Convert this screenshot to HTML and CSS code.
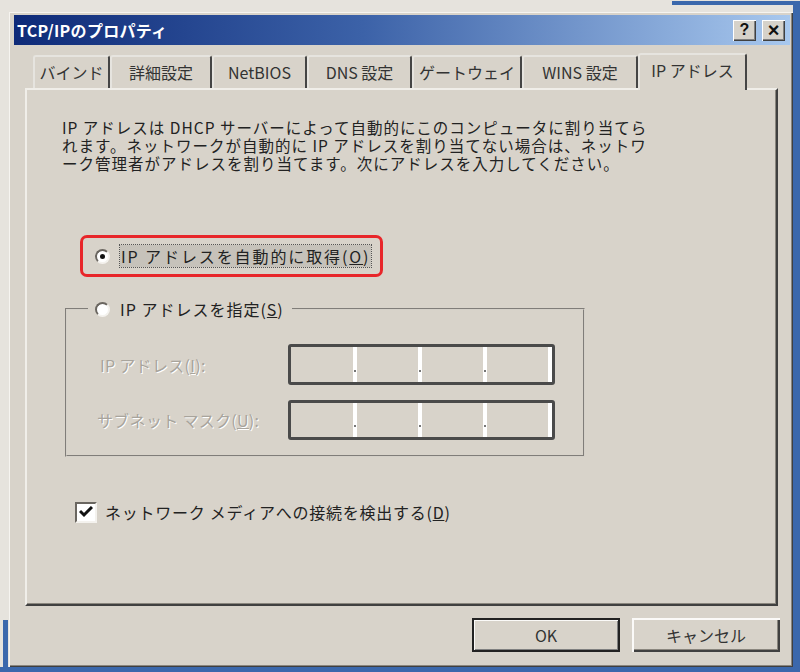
FILE: index.html
```html
<!DOCTYPE html>
<html lang="ja">
<head>
    <meta charset="UTF-8">
    <title>TCP/IPのプロパティ</title>
    <link rel="stylesheet" href="styles.css">
</head>
<body>
    <!-- windows behind the dialog -->
    <div class="back back-top"></div>
    <div class="back back-right"></div>
    <div class="back back-left"></div>
    <div class="back back-bottom"></div>

    <div class="dialog">
        <div class="titlebar">
            <span class="title">TCP/IPのプロパティ</span>
            <div class="title-btns">
                <span class="tbtn">?</span>
                <span class="tbtn tbtn-close">×</span>
            </div>
        </div>

        <div class="dialog-body">
            <div class="tabs">
                <div class="tab w1">バインド</div>
                <div class="tab w2">詳細設定</div>
                <div class="tab w3">NetBIOS</div>
                <div class="tab w4">DNS 設定</div>
                <div class="tab w5">ゲートウェイ</div>
                <div class="tab w6">WINS 設定</div>
                <div class="tab tab-active w7">IP アドレス</div>
            </div>

            <div class="panel">
                <p class="intro">IP アドレスは DHCP サーバーによって自動的にこのコンピュータに割り当てら<br>れます。ネットワークが自動的に IP アドレスを割り当てない場合は、ネットワ<br>ーク管理者がアドレスを割り当てます。次にアドレスを入力してください。</p>

                <div class="auto-option">
                    <span class="radio radio-on"></span>
                    <span class="focus-label">IP アドレスを自動的に取得(<u>O</u>)</span>
                </div>

                <fieldset class="group">
                    <legend class="group-legend">
                        <span class="radio"></span>
                        <span>IP アドレスを指定(<u>S</u>)</span>
                    </legend>
                    <div class="field-row">
                        <span class="field-label">IP アドレス(<u>I</u>):</span>
                        <div class="ipbox">
                            <span class="seg"></span><span class="dot"></span>
                            <span class="seg"></span><span class="dot"></span>
                            <span class="seg"></span><span class="dot"></span>
                            <span class="seg"></span><span class="edge"></span>
                        </div>
                    </div>
                    <div class="field-row field-row2">
                        <span class="field-label label-mask">サブネット マスク(<u>U</u>):</span>
                        <div class="ipbox">
                            <span class="seg"></span><span class="dot"></span>
                            <span class="seg"></span><span class="dot"></span>
                            <span class="seg"></span><span class="dot"></span>
                            <span class="seg"></span><span class="edge"></span>
                        </div>
                    </div>
                </fieldset>

                <div class="check-row">
                    <span class="checkbox">
                        <svg width="14" height="12" viewBox="0 0 14 12"><path d="M1 5 L5 9 L13 1" fill="none" stroke="#111" stroke-width="3"/></svg>
                    </span>
                    <span>ネットワーク メディアへの接続を検出する(<u>D</u>)</span>
                </div>
            </div>

            <div class="buttons">
                <button class="btn btn-default">OK</button>
                <button class="btn">キャンセル</button>
            </div>
        </div>
    </div>
</body>
</html>
```

FILE: styles.css
```css
/* General Styles */
* {
    box-sizing: border-box;
}

body {
    margin: 0;
    width: 800px;
    height: 672px;
    overflow: hidden;
    position: relative;
    background-color: #e6e3dd;
    padding: 12px 7px 5px 9px;
    font-family: "Noto Sans CJK JP", "Liberation Sans", sans-serif;
    color: #222;
}

/* Windows behind */
.back {
    position: absolute;
    background-color: #3b68ac;
}

.back-top {
    left: 672px;
    top: 1px;
    width: 128px;
    height: 4px;
}

.back-right {
    right: 0;
    top: 1px;
    width: 7px;
    height: 672px;
}

.back-left {
    left: 3px;
    top: 620px;
    width: 5px;
    height: 60px;
}

.back-bottom {
    left: 0;
    bottom: 0;
    width: 800px;
    height: 5px;
}

/* Dialog */
.dialog {
    position: relative;
    height: 655px;
    background-color: #d8d3ca;
    padding: 3px 3px 0 5px;
    display: flex;
    flex-direction: column;
    box-shadow: inset 1px 1px #f6f4f0, inset -1px -1px #404040, inset -2px -2px #8a867e;
}

.titlebar {
    height: 30px;
    display: flex;
    align-items: center;
    justify-content: space-between;
    background: linear-gradient(to right, #0e2a78, #3c62a8 45%, #a8c8ee);
    padding: 0 5px 0 3px;
}

.title {
    color: #fff;
    font-weight: bold;
    font-size: 16px;
    letter-spacing: 0.3px;
}

.title-btns {
    display: flex;
    gap: 6px;
}

.tbtn {
    width: 23px;
    height: 21px;
    background-color: #d6d2ca;
    box-shadow: inset 1px 1px #fff, inset -1px -1px #404040, inset -2px -2px #808080;
    display: flex;
    align-items: center;
    justify-content: center;
    font-family: "Liberation Sans", sans-serif;
    font-weight: bold;
    font-size: 16px;
    color: #111;
    line-height: 1;
}

.tbtn-close {
    font-size: 20px;
}

.dialog-body {
    flex: 1;
    padding: 8px 12px 0 11px;
}

/* Tabs */
.tabs {
    height: 35px;
    display: flex;
    align-items: flex-end;
    padding-left: 8px;
}

.tab {
    height: 33px;
    display: flex;
    align-items: center;
    justify-content: center;
    font-size: 16px;
    color: #333;
    border-top: 2px solid #e6e4df;
    border-left: 2px solid #e6e4df;
    border-right: 2px solid #454545;
    border-radius: 3px 3px 0 0;
    padding-bottom: 1px;
    white-space: nowrap;
}

.w1 { width: 77px; }
.w2 { width: 102px; }
.w3 { width: 95px; }
.w4 { width: 105px; }
.w5 { width: 110px; }
.w6 { width: 116px; }
.w7 { width: 109px; }

.tab-active {
    height: 37px;
    margin-bottom: -2px;
    position: relative;
    z-index: 1;
    background-color: #d8d3ca;
    padding-bottom: 5px;
}

/* Panel */
.panel {
    height: 518px;
    border-top: 2px solid #f0eee9;
    border-left: 2px solid #f0eee9;
    border-right: 2px solid #404040;
    border-bottom: 2px solid #404040;
    box-shadow: inset -1px -1px #8a867e;
    font-size: 16px;
}

.intro {
    margin: 28px 0 0 35px;
    font-size: 15.5px;
    line-height: 18px;
    letter-spacing: 1px;
}

/* Radios */
.radio {
    width: 15px;
    height: 15px;
    border-radius: 50%;
    background-color: #fff;
    border: 2px solid;
    border-color: #6a6660 #f4f2ee #f4f2ee #6a6660;
    display: inline-flex;
    align-items: center;
    justify-content: center;
    flex-shrink: 0;
}

.radio-on::after {
    content: "";
    width: 5px;
    height: 5px;
    border-radius: 50%;
    background-color: #111;
}

.auto-option {
    margin: 63px 0 0 53px;
    width: 303px;
    height: 42px;
    border: 3px solid #e8262a;
    border-radius: 7px;
    display: flex;
    align-items: center;
    padding-left: 12px;
    gap: 10px;
}

.focus-label {
    background-color: #c6c2ba;
    outline: 1px dotted #555;
    padding: 0 1px;
    line-height: 22px;
    letter-spacing: 1.9px;
}

/* Group box */
.group {
    margin: 22px 0 0 38px;
    width: 520px;
    height: 158px;
    padding: 0;
    border: 2px groove #d4d0c8;
}

.group-legend {
    margin-left: 21px;
    padding: 0 8px 0 7px;
    display: flex;
    align-items: center;
    gap: 10px;
    line-height: 20px;
    letter-spacing: 1px;
}

.field-row {
    display: flex;
    align-items: center;
    margin: 25px 0 0 33px;
    height: 41px;
}

.field-row2 {
    margin-top: 15px;
    height: 40px;
}

.field-label {
    width: 188px;
    color: #a8a49c;
    text-shadow: 1px 1px #fff;
    letter-spacing: 0.3px;
}

.label-mask {
    margin-left: -3px;
    width: 191px;
}

.ipbox {
    width: 267px;
    height: 100%;
    border: 3px solid #4a4a4a;
    border-radius: 3px;
    display: flex;
    padding: 0 0 0 1px;
}

.seg {
    width: 63px;
}

.dot,
.edge {
    width: 4px;
    background-color: #fff;
    position: relative;
}

.dot::after {
    content: "";
    position: absolute;
    left: 1px;
    bottom: 10px;
    width: 2px;
    height: 2px;
    background-color: #777;
}

/* Checkbox */
.check-row {
    margin: 43px 0 0 48px;
    display: flex;
    align-items: center;
    gap: 8px;
    letter-spacing: 0.75px;
}

.checkbox {
    width: 22px;
    height: 21px;
    background-color: #fff;
    border: 2px solid;
    border-color: #6a6660 #f4f2ee #f4f2ee #6a6660;
    display: flex;
    align-items: center;
    justify-content: center;
}

/* Buttons */
.buttons {
    display: flex;
    justify-content: flex-end;
    gap: 12px;
    margin: 12px -2px 0 0;
}

.btn {
    width: 148px;
    height: 34px;
    background-color: #d8d3ca;
    border: none;
    font-family: "Noto Sans CJK JP", "Liberation Sans", sans-serif;
    font-size: 16px;
    color: #333;
    box-shadow: inset 2px 2px #fbfaf8, inset -2px -2px #404040, inset -3px -3px #8a867e;
}

.btn-default {
    box-shadow: inset 0 0 0 2px #222, inset 3px 3px #fbfaf8, inset -3px -3px #808080;
}
```
